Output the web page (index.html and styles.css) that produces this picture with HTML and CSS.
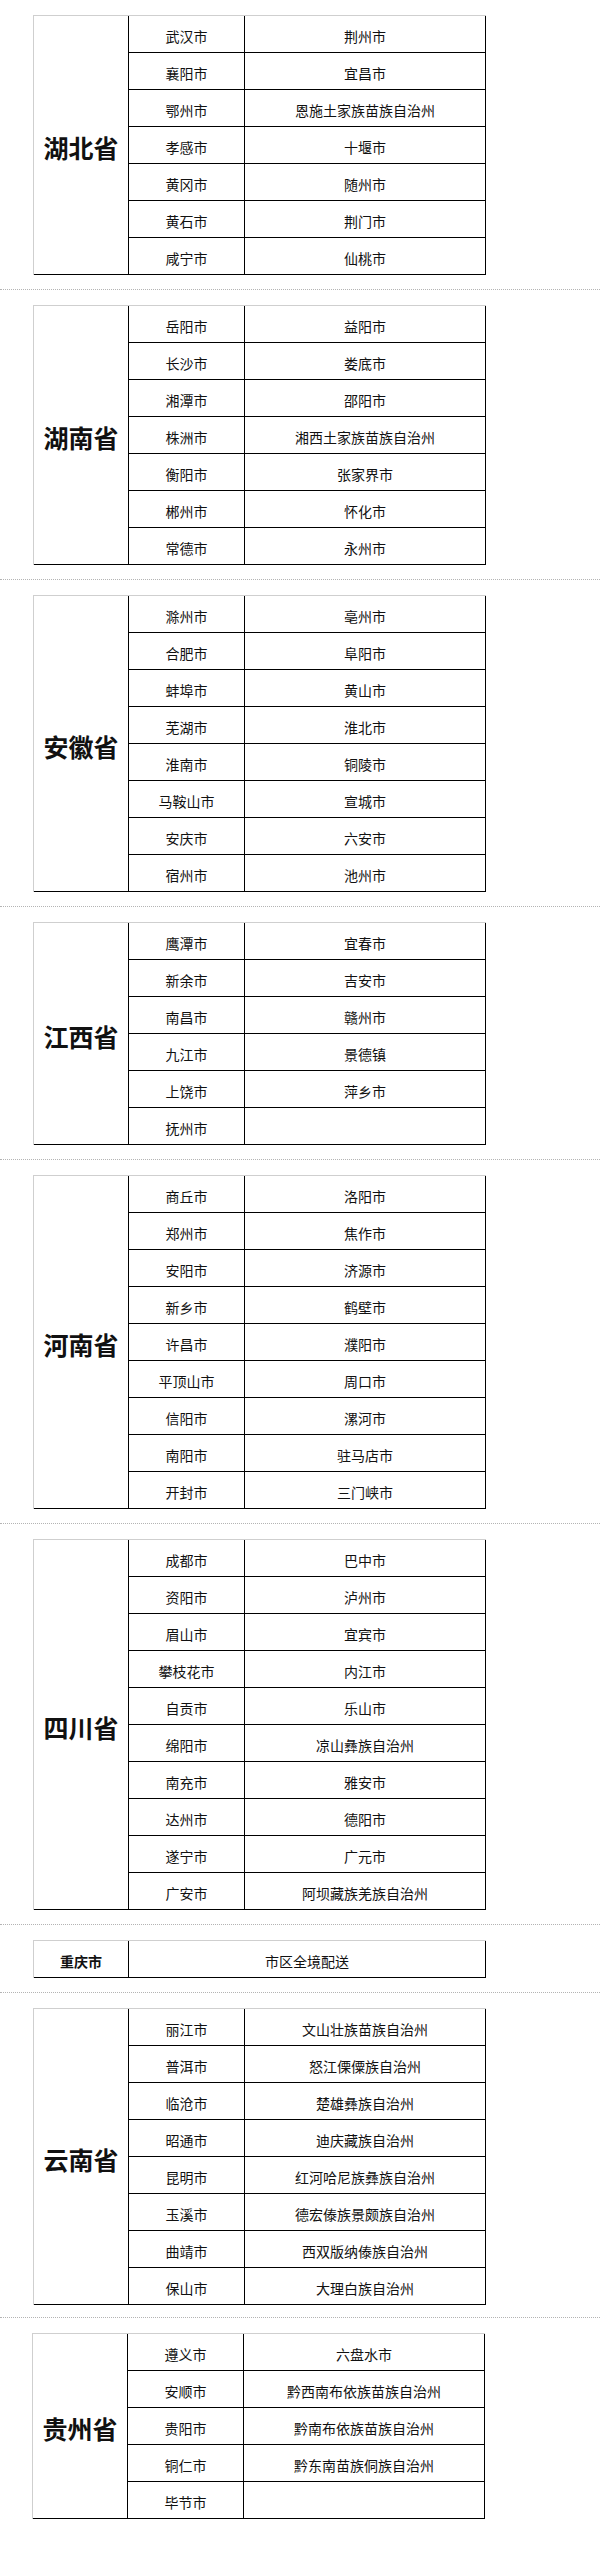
FILE: index.html
```html
<!DOCTYPE html>
<html lang="zh-CN">
<head>
<meta charset="utf-8">
<title>配送范围</title>
<link rel="stylesheet" href="styles.css">
</head>
<body>
<main class="page">

  <section class="region">
    <div class="grid">
      <div class="province">湖北省</div>
      <div class="cities">
        <div class="row"><span class="cell">武汉市</span><span class="cell">荆州市</span></div>
        <div class="row"><span class="cell">襄阳市</span><span class="cell">宜昌市</span></div>
        <div class="row"><span class="cell">鄂州市</span><span class="cell">恩施土家族苗族自治州</span></div>
        <div class="row"><span class="cell">孝感市</span><span class="cell">十堰市</span></div>
        <div class="row"><span class="cell">黄冈市</span><span class="cell">随州市</span></div>
        <div class="row"><span class="cell">黄石市</span><span class="cell">荆门市</span></div>
        <div class="row"><span class="cell">咸宁市</span><span class="cell">仙桃市</span></div>
      </div>
    </div>
  </section>

  <div class="sep"></div>

  <section class="region">
    <div class="grid">
      <div class="province">湖南省</div>
      <div class="cities">
        <div class="row"><span class="cell">岳阳市</span><span class="cell">益阳市</span></div>
        <div class="row"><span class="cell">长沙市</span><span class="cell">娄底市</span></div>
        <div class="row"><span class="cell">湘潭市</span><span class="cell">邵阳市</span></div>
        <div class="row"><span class="cell">株洲市</span><span class="cell">湘西土家族苗族自治州</span></div>
        <div class="row"><span class="cell">衡阳市</span><span class="cell">张家界市</span></div>
        <div class="row"><span class="cell">郴州市</span><span class="cell">怀化市</span></div>
        <div class="row"><span class="cell">常德市</span><span class="cell">永州市</span></div>
      </div>
    </div>
  </section>

  <div class="sep"></div>

  <section class="region">
    <div class="grid">
      <div class="province">安徽省</div>
      <div class="cities">
        <div class="row"><span class="cell">滁州市</span><span class="cell">亳州市</span></div>
        <div class="row"><span class="cell">合肥市</span><span class="cell">阜阳市</span></div>
        <div class="row"><span class="cell">蚌埠市</span><span class="cell">黄山市</span></div>
        <div class="row"><span class="cell">芜湖市</span><span class="cell">淮北市</span></div>
        <div class="row"><span class="cell">淮南市</span><span class="cell">铜陵市</span></div>
        <div class="row"><span class="cell">马鞍山市</span><span class="cell">宣城市</span></div>
        <div class="row"><span class="cell">安庆市</span><span class="cell">六安市</span></div>
        <div class="row"><span class="cell">宿州市</span><span class="cell">池州市</span></div>
      </div>
    </div>
  </section>

  <div class="sep"></div>

  <section class="region">
    <div class="grid">
      <div class="province">江西省</div>
      <div class="cities">
        <div class="row"><span class="cell">鹰潭市</span><span class="cell">宜春市</span></div>
        <div class="row"><span class="cell">新余市</span><span class="cell">吉安市</span></div>
        <div class="row"><span class="cell">南昌市</span><span class="cell">赣州市</span></div>
        <div class="row"><span class="cell">九江市</span><span class="cell">景德镇</span></div>
        <div class="row"><span class="cell">上饶市</span><span class="cell">萍乡市</span></div>
        <div class="row"><span class="cell">抚州市</span><span class="cell"></span></div>
      </div>
    </div>
  </section>

  <div class="sep"></div>

  <section class="region">
    <div class="grid">
      <div class="province">河南省</div>
      <div class="cities">
        <div class="row"><span class="cell">商丘市</span><span class="cell">洛阳市</span></div>
        <div class="row"><span class="cell">郑州市</span><span class="cell">焦作市</span></div>
        <div class="row"><span class="cell">安阳市</span><span class="cell">济源市</span></div>
        <div class="row"><span class="cell">新乡市</span><span class="cell">鹤壁市</span></div>
        <div class="row"><span class="cell">许昌市</span><span class="cell">濮阳市</span></div>
        <div class="row"><span class="cell">平顶山市</span><span class="cell">周口市</span></div>
        <div class="row"><span class="cell">信阳市</span><span class="cell">漯河市</span></div>
        <div class="row"><span class="cell">南阳市</span><span class="cell">驻马店市</span></div>
        <div class="row"><span class="cell">开封市</span><span class="cell">三门峡市</span></div>
      </div>
    </div>
  </section>

  <div class="sep"></div>

  <section class="region">
    <div class="grid">
      <div class="province">四川省</div>
      <div class="cities">
        <div class="row"><span class="cell">成都市</span><span class="cell">巴中市</span></div>
        <div class="row"><span class="cell">资阳市</span><span class="cell">泸州市</span></div>
        <div class="row"><span class="cell">眉山市</span><span class="cell">宜宾市</span></div>
        <div class="row"><span class="cell">攀枝花市</span><span class="cell">内江市</span></div>
        <div class="row"><span class="cell">自贡市</span><span class="cell">乐山市</span></div>
        <div class="row"><span class="cell">绵阳市</span><span class="cell">凉山彝族自治州</span></div>
        <div class="row"><span class="cell">南充市</span><span class="cell">雅安市</span></div>
        <div class="row"><span class="cell">达州市</span><span class="cell">德阳市</span></div>
        <div class="row"><span class="cell">遂宁市</span><span class="cell">广元市</span></div>
        <div class="row"><span class="cell">广安市</span><span class="cell">阿坝藏族羌族自治州</span></div>
      </div>
    </div>
  </section>

  <div class="sep"></div>

  <section class="region">
    <div class="grid">
      <div class="province province--small">重庆市</div>
      <div class="cities">
        <div class="row row--single"><span class="cell">市区全境配送</span></div>
      </div>
    </div>
  </section>

  <div class="sep"></div>

  <section class="region">
    <div class="grid">
      <div class="province">云南省</div>
      <div class="cities">
        <div class="row"><span class="cell">丽江市</span><span class="cell">文山壮族苗族自治州</span></div>
        <div class="row"><span class="cell">普洱市</span><span class="cell">怒江傈僳族自治州</span></div>
        <div class="row"><span class="cell">临沧市</span><span class="cell">楚雄彝族自治州</span></div>
        <div class="row"><span class="cell">昭通市</span><span class="cell">迪庆藏族自治州</span></div>
        <div class="row"><span class="cell">昆明市</span><span class="cell">红河哈尼族彝族自治州</span></div>
        <div class="row"><span class="cell">玉溪市</span><span class="cell">德宏傣族景颇族自治州</span></div>
        <div class="row"><span class="cell">曲靖市</span><span class="cell">西双版纳傣族自治州</span></div>
        <div class="row"><span class="cell">保山市</span><span class="cell">大理白族自治州</span></div>
      </div>
    </div>
  </section>

  <div class="sep sep--tight"></div>

  <section class="region region--last">
    <div class="grid">
      <div class="province">贵州省</div>
      <div class="cities">
        <div class="row"><span class="cell">遵义市</span><span class="cell">六盘水市</span></div>
        <div class="row"><span class="cell">安顺市</span><span class="cell">黔西南布依族苗族自治州</span></div>
        <div class="row"><span class="cell">贵阳市</span><span class="cell">黔南布依族苗族自治州</span></div>
        <div class="row"><span class="cell">铜仁市</span><span class="cell">黔东南苗族侗族自治州</span></div>
        <div class="row"><span class="cell">毕节市</span><span class="cell"></span></div>
      </div>
    </div>
  </section>

</main>
</body>
</html>
```

FILE: styles.css
```css
html, body {
  margin: 0;
  padding: 0;
  background: #fff;
}

.page {
  padding-top: 15px;
  font-family: "Noto Sans CJK SC", "Noto Sans", sans-serif;
  color: #111;
}

.region {
  padding-left: 33px;
}

.region--last {
  padding-left: 32px;
  margin-top: 7px;
}

.grid {
  display: flex;
  width: 453px;
  box-sizing: border-box;
  border-top: 1px solid #cfcfcf;
  border-left: 1px solid #cfcfcf;
}

.province {
  flex: 0 0 95px;
  box-sizing: border-box;
  border-right: 1px solid #000;
  border-bottom: 1px solid #000;
  display: flex;
  align-items: center;
  justify-content: center;
  padding-top: 4px;
  font-size: 25px;
  font-weight: 700;
  letter-spacing: 0;
  color: #111;
}

.province--small {
  font-size: 14px;
  padding-top: 3px;
}

.cities {
  flex: 1 1 auto;
  display: flex;
  flex-direction: column;
}

.row {
  display: grid;
  grid-template-columns: 116px 241px;
  height: 37px;
}

.row--single {
  grid-template-columns: 357px;
}

.cell {
  box-sizing: border-box;
  border-right: 1px solid #000;
  border-bottom: 1px solid #000;
  display: flex;
  align-items: center;
  justify-content: center;
  padding-top: 3px;
  font-size: 14px;
  line-height: 1;
  white-space: nowrap;
}

.sep {
  margin: 14px 0 15px;
  border-top: 1px dotted #b4b4b4;
}

.sep--tight {
  margin: 12px 0 15px;
}
```
